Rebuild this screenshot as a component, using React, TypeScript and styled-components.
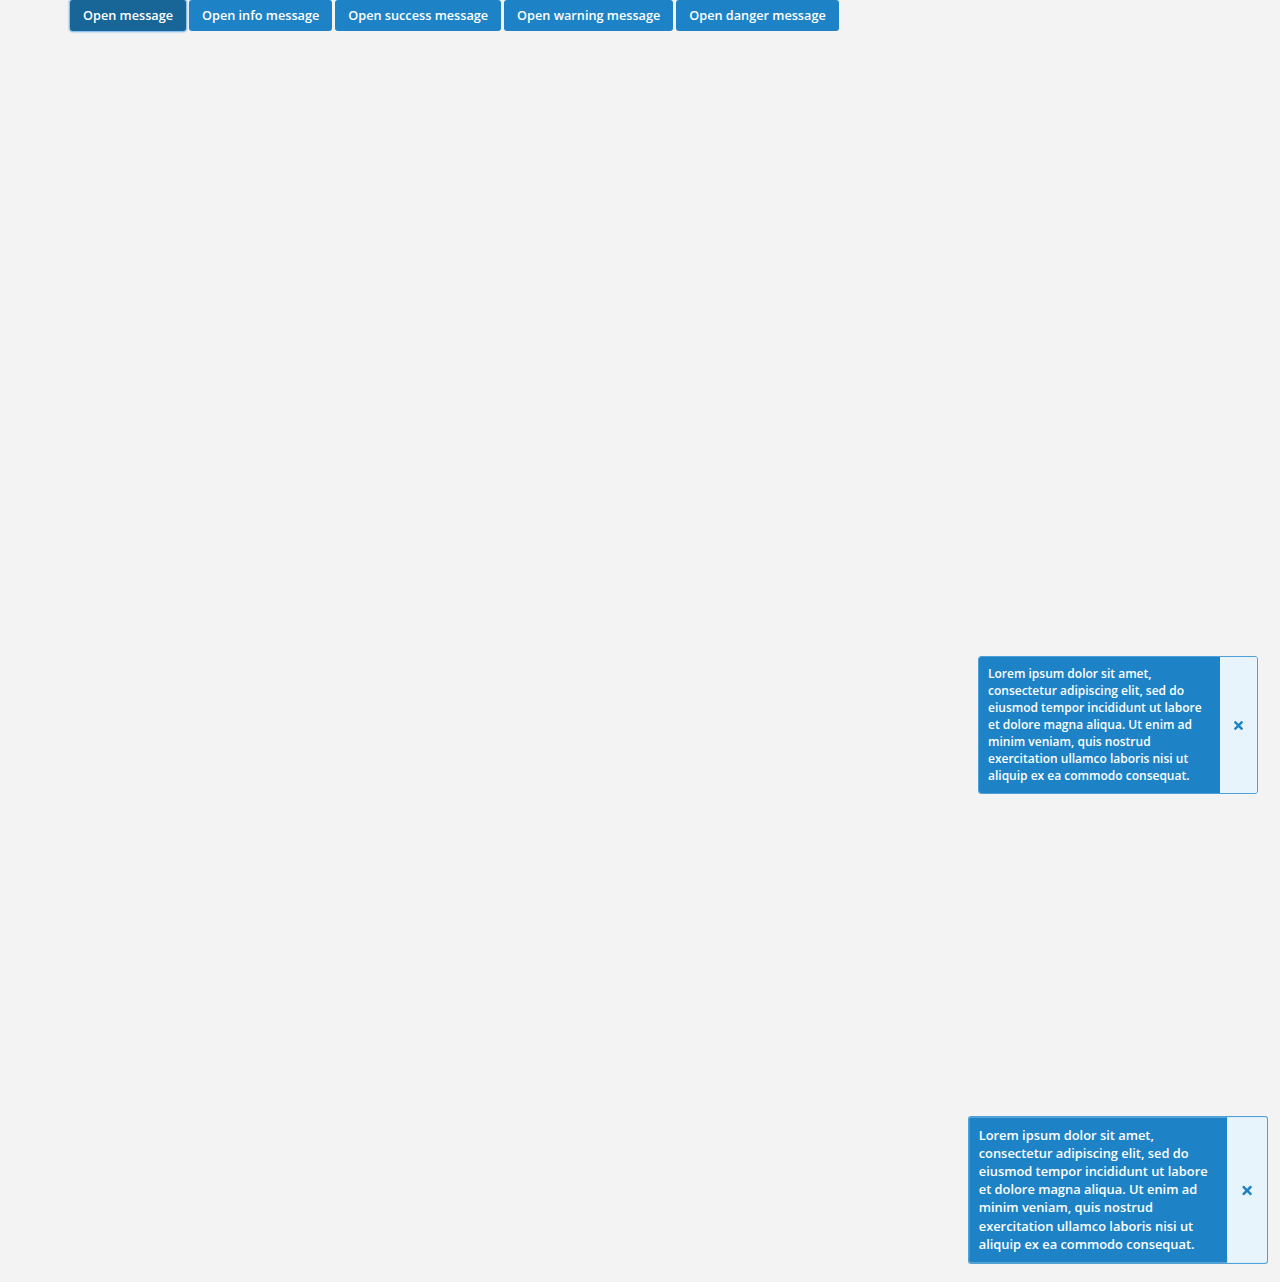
import React from "react";
import styled, { createGlobalStyle } from "styled-components";
import { FaTimes } from "react-icons/fa";

const GlobalStyle = createGlobalStyle`
  html, body {
    margin: 0;
    padding: 0;
    background: #f3f3f3;
    font-family: "Open Sans", "Liberation Sans", sans-serif;
  }
`;

const LOREM =
  "Lorem ipsum dolor sit amet, consectetur adipiscing elit, sed do eiusmod tempor incididunt ut labore et dolore magna aliqua. Ut enim ad minim veniam, quis nostrud exercitation ullamco laboris nisi ut aliquip ex ea commodo consequat.";

const buttons = [
  "Open message",
  "Open info message",
  "Open success message",
  "Open warning message",
  "Open danger message",
];

export default function App() {
  return (
    <Page>
      <GlobalStyle />
      <Toolbar>
        {buttons.map((label, i) => (
          <Button key={label} $active={i === 0}>
            {label}
          </Button>
        ))}
      </Toolbar>

      <Toast $top={656} $scale={1}>
        <ToastText>{LOREM}</ToastText>
        <CloseBox aria-label="close">
          <FaTimes />
        </CloseBox>
      </Toast>

      <Toast $top={1121} $scale={1.0714}>
        <ToastText>{LOREM}</ToastText>
        <CloseBox aria-label="close">
          <FaTimes />
        </CloseBox>
      </Toast>
    </Page>
  );
}

const Page = styled.div`
  width: 1280px;
  height: 1282px;
  position: relative;
  overflow: hidden;
`;

const Toolbar = styled.div`
  display: flex;
  gap: 3px;
  padding-left: 70px;
`;

const Button = styled.button<{ $active?: boolean }>`
  height: 31px;
  padding: 0 13px;
  border: none;
  border-radius: 3px;
  background: ${(p) => (p.$active ? "#186598" : "#1d83c6")};
  box-shadow: ${(p) => (p.$active ? "0 0 2px 1px #66afe9" : "none")};
  color: #ffffff;
  font-family: "Open Sans", "Liberation Sans", sans-serif;
  font-weight: 600;
  font-size: 12.7px;
  line-height: 31px;
  cursor: pointer;
  white-space: nowrap;
`;

const Toast = styled.div<{ $top: number; $scale: number }>`
  position: absolute;
  left: 978px;
  top: ${(p) => p.$top}px;
  width: 280px;
  height: 138px;
  box-sizing: border-box;
  display: flex;
  border: 1px solid #4f9fd8;
  border-radius: 3px;
  overflow: hidden;
  transform: scale(${(p) => p.$scale});
  transform-origin: center center;
`;

const ToastText = styled.div`
  width: 241px;
  box-sizing: border-box;
  background: #1d83c6;
  color: #ffffff;
  font-size: 12px;
  font-weight: 600;
  line-height: 17px;
  padding: 8px 10px 10px 9px;
`;

const CloseBox = styled.div`
  flex: 1;
  display: flex;
  align-items: center;
  justify-content: center;
  background: #e8f4fc;
  color: #1d83c6;
  font-size: 13px;
`;
